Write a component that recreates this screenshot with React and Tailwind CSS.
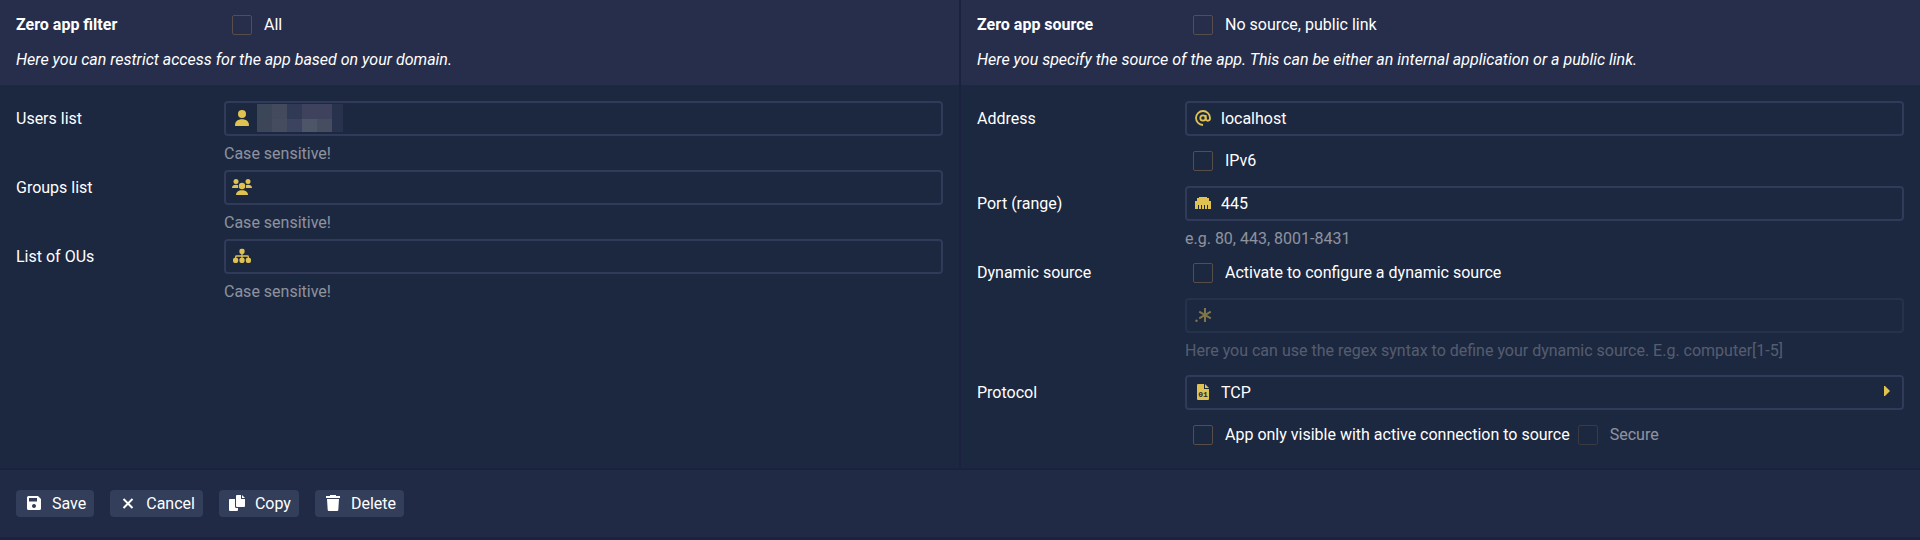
import React, { useState } from "react";

function Icon({ children }) {
  return (
    <svg viewBox="0 0 20 21" className="w-5 h-[21px] shrink-0" fill="currentColor" aria-hidden="true">
      {children}
    </svg>
  );
}

const UserIcon = () => (
  <Icon>
    <circle cx="10" cy="6" r="4" />
    <path d="M3.6 18Q3 18 3 17.2C3 13.2 6 11.2 10 11.2S17 13.2 17 17.2Q17 18 16.4 18Z" />
  </Icon>
);

const GroupIcon = () => (
  <Icon>
    <circle cx="4" cy="4.4" r="2.5" />
    <circle cx="16" cy="4.4" r="2.5" />
    <path d="M0 11C0 8.8 1.7 7.8 4 7.8Q5.3 7.8 6.2 8.3Q5.7 9.8 6.3 11Z" />
    <path d="M20 11C20 8.8 18.3 7.8 16 7.8Q14.7 7.8 13.8 8.3Q14.3 9.8 13.7 11Z" />
    <circle cx="10" cy="9" r="3.2" />
    <path d="M4 18C4 14.9 6.4 13.2 10 13.2S16 14.9 16 18Z" />
  </Icon>
);

const TreeIcon = () => (
  <Icon>
    <rect x="7.4" y="2.8" width="5.2" height="5.2" rx="1.9" />
    <path d="M10 7v6M3.7 13v-2.2q0-.8.8-.8h11q.8 0 .8.8V13" fill="none" stroke="currentColor" strokeWidth="1.3" />
    <rect x="1" y="11.7" width="5.2" height="5.2" rx="1.9" />
    <rect x="7.4" y="11.7" width="5.2" height="5.2" rx="1.9" />
    <rect x="13.8" y="11.7" width="5.2" height="5.2" rx="1.9" />
  </Icon>
);

const AtIcon = () => (
  <Icon>
    <g fill="none" stroke="currentColor" strokeWidth="1.8">
      <circle cx="10" cy="10" r="2.7" />
      <path d="M12.7 7v3.600a2.100 2.100 0 0 0 4.300 0V10a7 7 0 1 0-7 7" />
    </g>
  </Icon>
);

const PortIcon = () => (
  <Icon>
    <path d="M6 4h8v1h2v3h2v8h-3v-4h-1v4h-2v-4h-1v4h-2v-4h-1v4h-2v-4h-1v4h-3v-8h2v-3h2Z" />
  </Icon>
);

const RegexIcon = () => (
  <Icon>
    <circle cx="3.5" cy="15.7" r="1.2" />
    <path d="M12 3v14M6.2 6.6l11.6 6.8M17.8 6.6l-11.6 6.8" fill="none" stroke="currentColor" strokeWidth="2" />
  </Icon>
);

const BinaryFileIcon = () => (
  <Icon>
    <path d="M5 2h6v5h5v10q0 1-1 1H5q-1 0-1-1V3q0-1 1-1ZM12 2l4 4h-4Z" />
    <text x="10" y="15" textAnchor="middle" fill="#1c2740" className="text-[8px] font-bold font-['Liberation_Mono',monospace]">
      01
    </text>
  </Icon>
);

const SaveIcon = () => (
  <Icon>
    <path
      fillRule="evenodd"
      d="M4.5 3H14l3 3v9.5q0 1.5-1.5 1.5h-11Q3 17 3 15.5v-11Q3 3 4.5 3ZM5 5v3.5h8V5ZM10 11a2 2 0 1 0 .01 0Z"
    />
  </Icon>
);

const CancelIcon = () => (
  <Icon>
    <path d="M5.5 6l9 9M14.5 6l-9 9" fill="none" stroke="currentColor" strokeWidth="2" />
  </Icon>
);

const CopyIcon = () => (
  <Icon>
    <path d="M3 6h5v7.5q0 1.5 1.5 1.5H11v2q0 1-1 1H3q-1 0-1-1V7q0-1 1-1Z" />
    <path d="M10 2h4v4h4v7q0 1-1 1h-7q-1 0-1-1V3q0-1 1-1ZM15 2l3 3h-3Z" />
  </Icon>
);

const TrashIcon = () => (
  <Icon>
    <path d="M3 3h4V2h6v1h4v2H3ZM4 6h12l-.7 11q-.1 1-1.1 1H5.8q-1 0-1.1-1Z" />
  </Icon>
);

// anonymised user name, two rows of tinted tiles
const MASK = [
  ["bg-[#3c4659]", "bg-[#444a5d]", "bg-[#313a54]", "bg-[#3e425c]", "bg-[#3e425c]"],
  ["bg-[#3d4659]", "bg-[#464c60]", "bg-[#3b435f]", "bg-[#4d5569]", "bg-[#464d61]"],
];

function MaskedName() {
  return (
    <span className="flex ml-[5px] mb-[3px] mt-px bg-[#29324d] pr-[11px]" aria-label="hidden user">
      <span>
        {MASK.map((row, i) => (
          <span key={i} className="flex">
            {row.map((tint, j) => (
              <span key={j} className={`w-[15px] ${i === 0 ? "h-[15px]" : "h-[13px]"} ${tint}`} />
            ))}
          </span>
        ))}
      </span>
    </span>
  );
}

function Row({ label, htmlFor, children }) {
  return (
    <div className="flex">
      <div className="w-[208px] shrink-0 leading-[35px]">
        {label && <label htmlFor={htmlFor}>{label}</label>}
      </div>
      <div className="flex-1 min-w-0">{children}</div>
    </div>
  );
}

function Field({ id, icon, value = "", disabled, masked, hint, ariaLabel }) {
  const [text, setText] = useState(value);
  return (
    <div className={disabled ? "opacity-50" : ""}>
      <div className="flex items-center h-[35px] px-1.5 border-2 border-[#313b59] rounded-[4px]">
        <span className="text-[#dfc250]">{icon}</span>
        {masked && <MaskedName />}
        <input
          id={id}
          type="text"
          value={text}
          disabled={disabled}
          aria-label={ariaLabel}
          onChange={(e) => setText(e.target.value)}
          className="flex-1 min-w-0 ml-2 bg-transparent outline-none"
        />
      </div>
      {hint && <p className="h-[34px] leading-[36px] text-white/50">{hint}</p>}
    </div>
  );
}

function Check({ id, label, disabled }) {
  return (
    <label htmlFor={id} className={`flex items-center gap-3 ${disabled ? "opacity-50" : ""}`}>
      <input
        id={id}
        type="checkbox"
        disabled={disabled}
        className="appearance-none size-5 shrink-0 border border-[#574d49] rounded-[2px] checked:bg-[#dfc250]"
      />
      {label}
    </label>
  );
}

function PanelHeader({ title, text, checkId, checkLabel }) {
  return (
    <div className="bg-[#262e4c] px-4 py-2">
      <div className="flex items-center h-[34px]">
        <h2 className="w-[208px] shrink-0 font-bold">{title}</h2>
        <div className="pl-2">
          <Check id={checkId} label={checkLabel} />
        </div>
      </div>
      <p className="italic leading-[35px]">{text}</p>
    </div>
  );
}

function ActionButton({ icon, children }) {
  return (
    <button type="button" className="flex items-center gap-2 h-[27px] px-2 rounded-[4px] bg-[#333e5b] hover:bg-[#3f4b6b]">
      {icon}
      {children}
    </button>
  );
}

function App() {
  const [protocol, setProtocol] = useState("TCP");

  return (
    <form className="min-h-screen bg-[#1b2240] text-white text-base font-['Roboto',sans-serif]">
      <div className="grid grid-cols-2 gap-[2px]">
        <section className="bg-[#1c2740]">
          <PanelHeader
            title="Zero app filter"
            text="Here you can restrict access for the app based on your domain."
            checkId="all"
            checkLabel="All"
          />
          <div className="p-4">
            <Row label="Users list" htmlFor="users">
              <Field id="users" icon={<UserIcon />} masked hint="Case sensitive!" />
            </Row>
            <Row label="Groups list" htmlFor="groups">
              <Field id="groups" icon={<GroupIcon />} hint="Case sensitive!" />
            </Row>
            <Row label="List of OUs" htmlFor="ous">
              <Field id="ous" icon={<TreeIcon />} hint="Case sensitive!" />
            </Row>
          </div>
        </section>

        <section className="bg-[#1c2740]">
          <PanelHeader
            title="Zero app source"
            text="Here you specify the source of the app. This can be either an internal application or a public link."
            checkId="no-source"
            checkLabel="No source, public link"
          />
          <div className="p-4">
            <Row label="Address" htmlFor="address">
              <Field id="address" icon={<AtIcon />} value="localhost" />
              <div className="flex items-center h-[34px] my-2 pl-2">
                <Check id="ipv6" label="IPv6" />
              </div>
            </Row>
            <Row label="Port (range)" htmlFor="port">
              <Field id="port" icon={<PortIcon />} value="445" hint="e.g. 80, 443, 8001-8431" />
            </Row>
            <Row label="Dynamic source" htmlFor="dynamic">
              <div className="flex items-center h-9 mb-[7px] pl-2">
                <Check id="dynamic" label="Activate to configure a dynamic source" />
              </div>
              <Field
                icon={<RegexIcon />}
                disabled
                ariaLabel="Dynamic source expression"
                hint="Here you can use the regex syntax to define your dynamic source. E.g. computer[1-5]"
              />
            </Row>
            <div className="mt-2">
              <Row label="Protocol" htmlFor="protocol">
                <div className="flex items-center h-[35px] pl-1.5 pr-3 border-2 border-[#313b59] rounded-[4px]">
                  <span className="text-[#dfc250]">
                    <BinaryFileIcon />
                  </span>
                  <select
                    id="protocol"
                    value={protocol}
                    onChange={(e) => setProtocol(e.target.value)}
                    className="appearance-none flex-1 min-w-0 ml-2 bg-transparent outline-none"
                  >
                    <option>TCP</option>
                    <option>UDP</option>
                  </select>
                  <svg viewBox="0 0 6 13" className="w-1.5 h-[13px] text-[#dfc250]" fill="currentColor" aria-hidden="true">
                    <path d="M0 0h1l5 5-5 5H0Z" />
                  </svg>
                </div>
                <div className="flex items-center gap-2 h-[34px] mt-2 pl-2">
                  <Check id="visible" label="App only visible with active connection to source" />
                  <Check id="secure" label="Secure" disabled />
                </div>
              </Row>
            </div>
          </div>
        </section>
      </div>

      <footer className="flex gap-4 mt-[2px] px-4 py-5 bg-[#212a44]">
        <ActionButton icon={<SaveIcon />}>Save</ActionButton>
        <ActionButton icon={<CancelIcon />}>Cancel</ActionButton>
        <ActionButton icon={<CopyIcon />}>Copy</ActionButton>
        <ActionButton icon={<TrashIcon />}>Delete</ActionButton>
      </footer>
    </form>
  );
}

export default App;
